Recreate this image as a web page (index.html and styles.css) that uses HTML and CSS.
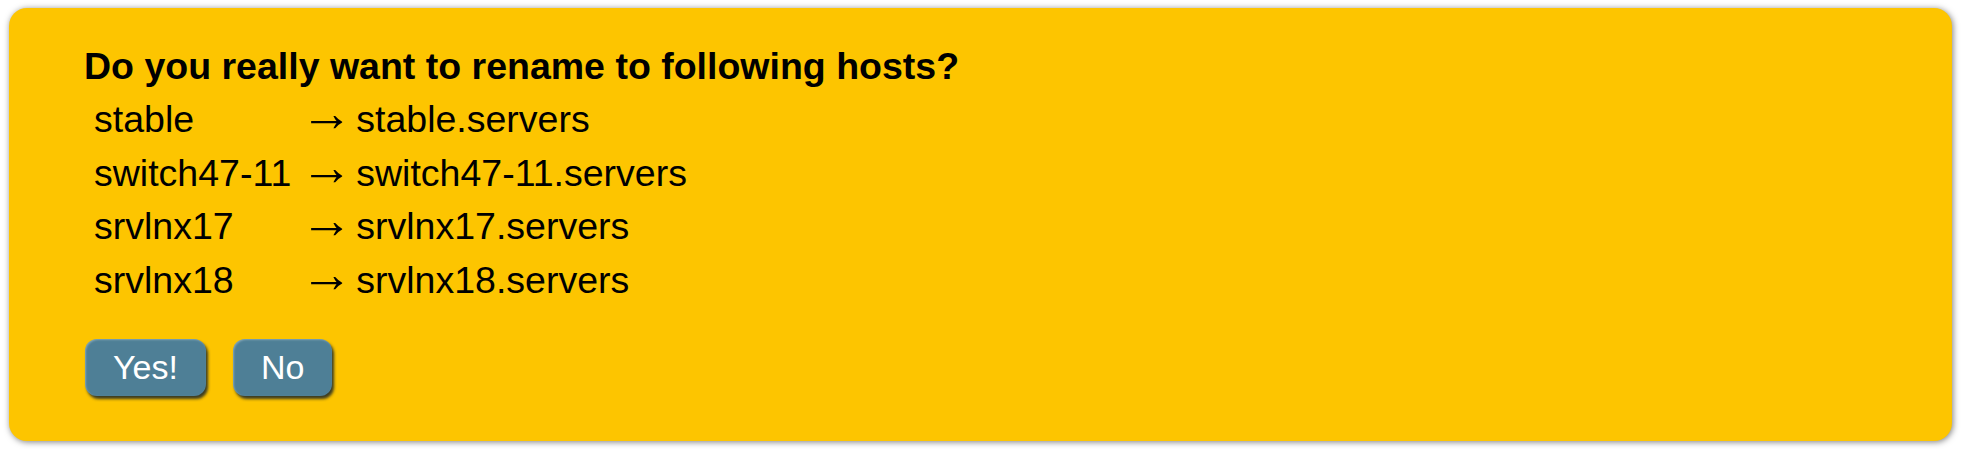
FILE: index.html
```html
<!DOCTYPE html>
<html>
<head>
<meta charset="utf-8">
<link rel="stylesheet" href="styles.css">
</head>
<body>
<div class="card">
  <h1 class="title">Do you really want to rename to following hosts?</h1>
  <table class="hosts">
    <tr><td class="old">stable</td><td class="new"><span class="arrow">→</span> stable.servers</td></tr>
    <tr><td class="old">switch47-11</td><td class="new"><span class="arrow">→</span> switch47-11.servers</td></tr>
    <tr><td class="old">srvlnx17</td><td class="new"><span class="arrow">→</span> srvlnx17.servers</td></tr>
    <tr><td class="old">srvlnx18</td><td class="new"><span class="arrow">→</span> srvlnx18.servers</td></tr>
  </table>
  <div class="actions">
    <button class="btn">Yes!</button>
    <button class="btn">No</button>
  </div>
</div>
</body>
</html>
```
FILE: styles.css
```css
html, body {
  margin: 0;
  padding: 0;
  background: #ffffff;
}
body {
  padding: 8px 9px;
  font-family: "Liberation Sans", Arial, sans-serif;
}
.card {
  height: 433px;
  box-sizing: border-box;
  background: #fdc500;
  border-radius: 18px;
  box-shadow: 1px 1px 6px rgba(0, 0, 0, 0.5);
  padding: 37px 75px 0 75px;
}
.title {
  margin: 0;
  font-size: 37.5px;
  font-weight: bold;
  color: #000;
  line-height: 42px;
  white-space: nowrap;
}
.hosts {
  border-collapse: collapse;
  margin-top: 6px;
  font-size: 37.5px;
  color: #000;
}
.hosts td {
  padding: 0;
  height: 53.5px;
  vertical-align: middle;
  white-space: nowrap;
}
.hosts td.old {
  padding: 0 9px 0 10px;
}
.arrow {
  font-family: "Liberation Serif", "Times New Roman", serif;
  font-size: 1.4em;
  line-height: 0;
  vertical-align: 1px;
  margin-right: -7px;
}
.actions {
  display: flex;
  gap: 27px;
  margin-top: 32px;
  padding-left: 1px;
}
.btn {
  font-family: "Liberation Sans", Arial, sans-serif;
  font-size: 34px;
  color: #fff;
  background: #4e7f96;
  border: none;
  border-radius: 12px;
  height: 57px;
  padding: 0 28px;
  box-shadow: 2px 3px 3px rgba(25, 35, 40, 0.85), inset 1px 1px 2px rgba(255, 255, 255, 0.3);
}
```
